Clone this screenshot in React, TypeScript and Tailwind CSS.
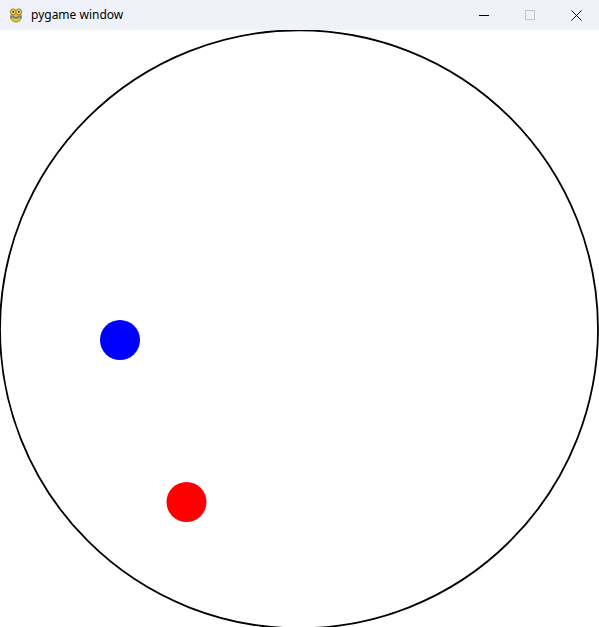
import React from "react";

function PygameIcon() {
  return (
    <svg width="16" height="16" viewBox="0 0 16 16">
      <ellipse cx="8" cy="10" rx="5.5" ry="5" fill="#e8c33a" stroke="#8a7426" strokeWidth="0.8" />
      <circle cx="5.2" cy="4.8" r="3" fill="#f0d050" stroke="#8a7426" strokeWidth="0.8" />
      <circle cx="10.8" cy="4.8" r="3" fill="#f0d050" stroke="#8a7426" strokeWidth="0.8" />
      <circle cx="5.2" cy="4.8" r="1" fill="#333" />
      <circle cx="10.8" cy="4.8" r="1" fill="#333" />
      <path d="M3 9.5 Q8 12 13 9.5" stroke="#4a6a8a" strokeWidth="1.6" fill="none" />
      <rect x="3.5" y="8.5" width="3" height="2.5" fill="#6b8fb0" />
      <rect x="9.5" y="8.5" width="3" height="2.5" fill="#6b8fb0" />
    </svg>
  );
}

export default function App() {
  return (
    <div className="w-[599px] h-[627px] overflow-hidden bg-white flex flex-col" style={{ fontFamily: "'Noto Sans', 'Open Sans', sans-serif" }}>
      <div className="h-[30px] bg-[#eff3f9] flex items-center shrink-0">
        <div className="ml-[8px] w-[16px] h-[16px] flex items-center justify-center">
          <PygameIcon />
        </div>
        <span className="ml-[7px] text-[12px] text-black leading-none">pygame window</span>
        <div className="ml-auto flex items-center h-full">
          <div className="w-[46px] h-full flex items-center justify-center">
            <div className="w-[10px] h-[1px] bg-black" />
          </div>
          <div className="w-[46px] h-full flex items-center justify-center">
            <div className="w-[10px] h-[10px] border border-[#c4c6cc]" />
          </div>
          <div className="w-[46px] h-full flex items-center justify-center">
            <svg width="11" height="11" viewBox="0 0 11 11">
              <path d="M0.5 0.5 L10.5 10.5 M10.5 0.5 L0.5 10.5" stroke="#000" strokeWidth="1" />
            </svg>
          </div>
        </div>
      </div>
      <div className="flex-1 bg-white">
        <svg width="599" height="597" viewBox="0 0 599 597">
          <circle cx="299" cy="299.3" r="299" fill="none" stroke="#000" strokeWidth="1.8" />
          <circle cx="120" cy="310" r="20" fill="#0000ff" />
          <circle cx="186.5" cy="472" r="20" fill="#ff0000" />
        </svg>
      </div>
    </div>
  );
}
